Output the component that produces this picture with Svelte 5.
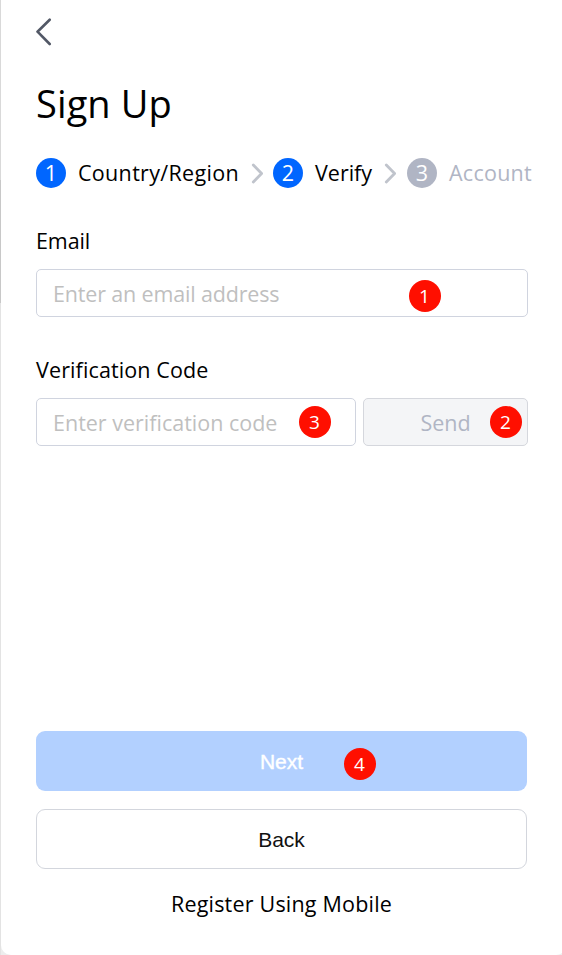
<script>
  const steps = [
    { n: 1, label: 'Country/Region', done: true, width: 173 },
    { n: 2, label: 'Verify', done: true, width: 69 },
    { n: 3, label: 'Account', done: false, width: 90 }
  ];
</script>

<main class="page">
  <div class="edge"><i class="upper"></i><i class="middle"></i><i class="lower"></i></div>
  <section class="card">
    <button class="back-arrow" aria-label="Go back">
      <svg width="17" height="29" viewBox="0 0 17 29"><path d="M13.7 2.7 1.5 14.7 13.7 27" /></svg>
    </button>
    <h1>Sign Up</h1>
    <ol class="steps">
      {#each steps as step, i}
        <li class:pending={!step.done}>
          <b>{step.n}</b>
          <span class="step-label" style="width: {step.width}px"><span class="s{step.n}">{step.label}</span></span>
          {#if i < 2}
            <svg width="12" height="21" viewBox="0 0 12 21"><path d="M2.3 2 10.6 10.5 2.3 19" /></svg>
          {/if}
        </li>
      {/each}
    </ol>

    <div class="label"><span class="l-email">Email</span></div>
    <div class="field"><span class="p-email">Enter an email address</span><em style="left: 372px; top: 10px">1</em></div>
    <div class="label second"><span class="l-code">Verification Code</span></div>
    <div class="row">
      <div class="field code"><span class="p-code">Enter verification code</span><em style="left: 262px; top: 7px">3</em></div>
      <div class="field send"><span class="t-send">Send</span><em style="left: 126px; top: 7px">2</em></div>
    </div>

    <div class="actions">
      <div class="button next">Next<em style="left: 308px; top: 17px">4</em></div>
      <div class="button back">Back</div>
      <div class="mobile"><span class="t-mobile">Register Using Mobile</span></div>
    </div>
  </section>
</main>

<style>
  :global(body) { margin: 0; background: #ededed; }
  .page {
    display: flex; width: 562px; height: 955px; overflow: hidden;
    font-family: "Open Sans", "Noto Sans", sans-serif; font-size: 21.5px; color: #000;
    white-space: nowrap;
  }
  .edge { width: 1px; flex: none; display: flex; flex-direction: column; }
  .edge i { display: block; }
  .upper { height: 180px; background: #d9d9d9; }
  .middle { height: 123px; background: #c8c8c8; }
  .lower { flex: 1; background: #e3e3e3; }
  .card {
    box-sizing: border-box; width: 565px; flex: none; height: 955px; padding: 17px 0 0 35px;
    background: #fff; border-radius: 0 0 10px 10px;
    display: flex; flex-direction: column; align-items: flex-start;
  }
  svg { display: block; fill: none; stroke-linecap: round; stroke-linejoin: round; }
  .back-arrow { border: 0; padding: 0; background: none; height: 29px; }
  .back-arrow svg { stroke: #525866; stroke-width: 2.6; }
  h1 { margin: 31px 0 0; height: 52px; line-height: 52px; font-size: 38px; font-weight: 400; letter-spacing: .1px; }
  .steps { list-style: none; margin: 29px 0 0; padding: 0; display: flex; height: 30px; }
  li { display: flex; align-items: center; }
  b {
    width: 30px; height: 30px; border-radius: 50%; background: #06f; color: #fff;
    font-weight: 400; line-height: 30px; text-align: center; margin-right: 12px;
  }
  .step-label { line-height: 30px; }
  .s1 { letter-spacing: .32px; }
  .s3 { letter-spacing: .25px; }
  li svg { stroke: #c0c4cc; stroke-width: 2.8; margin-right: 10px; }
  li:nth-child(2) svg { margin-right: 11px; }
  .pending b { background: #b0b5c4; }
  .pending { color: #b0b5c4; }
  .label { margin-top: 38px; height: 30px; line-height: 30px; }
  .l-email { letter-spacing: -.1px; }
  .p-email { letter-spacing: -.16px; }
  .l-code { letter-spacing: .12px; }
  .t-mobile { letter-spacing: .2px; }
  .field {
    position: relative; box-sizing: border-box; width: 492px; height: 48px; margin-top: 13px;
    border: 1px solid #d0d4df; border-radius: 5px; padding-left: 16px; line-height: 48px; color: #bfbfbf;
  }
  .row { display: flex; gap: 7px; }
  .code { width: 320px; }
  .send { width: 165px; padding: 0; text-align: center; background: #f4f5f7; border-color: #d5d7dd; color: #b0b5c4; }
  em {
    position: absolute; width: 32px; height: 32px; border-radius: 50%; background: #ff0f00; color: #fff;
    font: 19px/33px "Open Sans", sans-serif; text-align: center; text-indent: -1px;
    -webkit-text-stroke: 0;
  }
  .actions { margin-top: 285px; width: 491px; }
  .button {
    position: relative; box-sizing: border-box; height: 60px; border-radius: 9px; text-align: center;
    font-family: "Liberation Sans", Arial, sans-serif; font-size: 21px; line-height: 62px;
  }
  .next { background: #b2d0ff; color: #fff; -webkit-text-stroke: .4px #fff; }
  .back { margin-top: 18px; border: 1px solid #d3d6dd; line-height: 60px; color: #111; }
  .mobile { margin-top: 20px; line-height: 30px; text-align: center; }
</style>
